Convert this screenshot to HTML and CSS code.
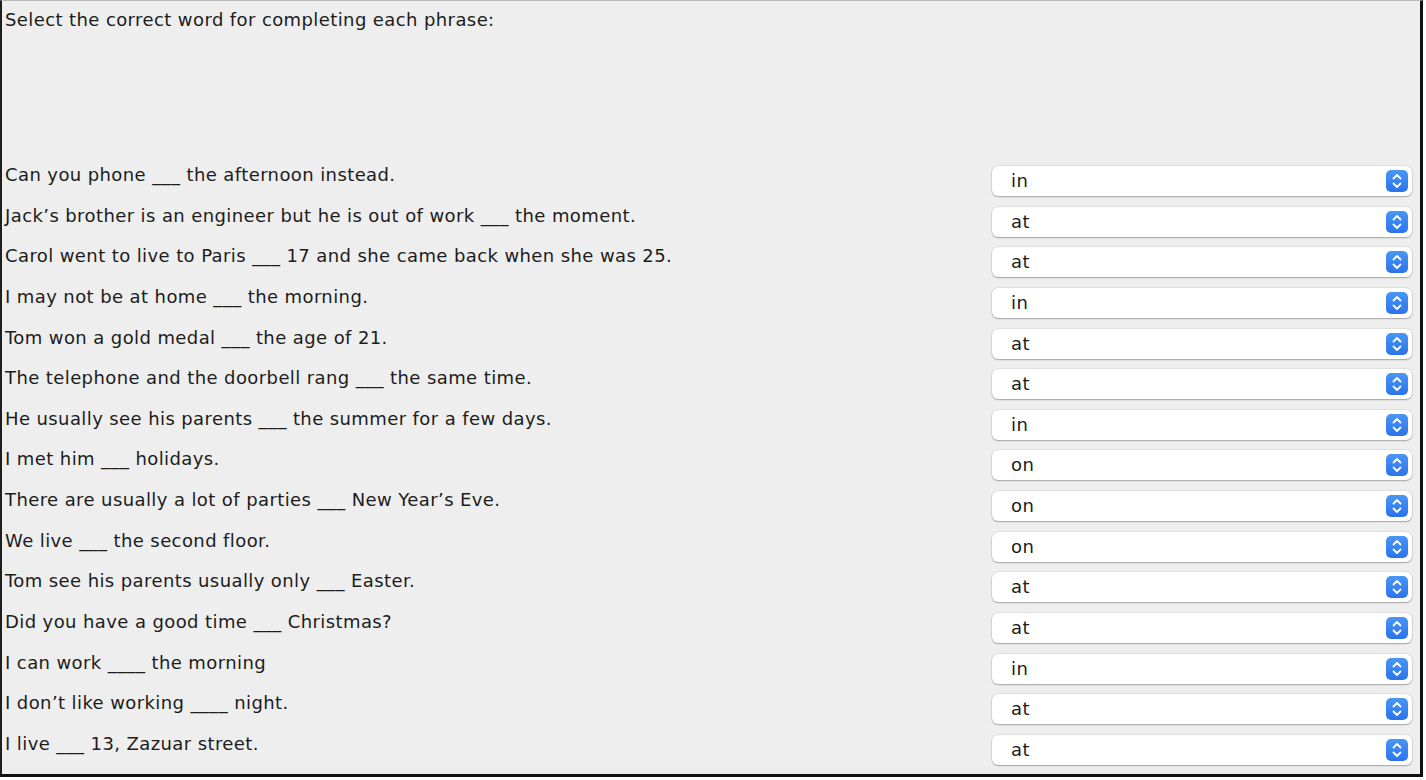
FILE: index.html
```html
<!DOCTYPE html>
<html>
<head>
<meta charset="utf-8">
<link rel="stylesheet" href="styles.css">
</head>
<body>
<div class="frame">
  <div class="title">Select the correct word for completing each phrase:</div>
  <div class="rows">
    <div class="label">Can you phone ___ the afternoon instead.</div>
    <div class="select"><span class="val">in</span><span class="stepper"><svg viewBox="0 0 22 22" width="22" height="22"><path d="M7.5 8.5 L11 5 L14.5 8.5 M7.5 13.5 L11 17 L14.5 13.5" fill="none" stroke="#fff" stroke-width="1.8" stroke-linecap="round" stroke-linejoin="round"/></svg></span></div>

    <div class="label">Jack’s brother is an engineer but he is out of work ___ the moment.</div>
    <div class="select"><span class="val">at</span><span class="stepper"><svg viewBox="0 0 22 22" width="22" height="22"><path d="M7.5 8.5 L11 5 L14.5 8.5 M7.5 13.5 L11 17 L14.5 13.5" fill="none" stroke="#fff" stroke-width="1.8" stroke-linecap="round" stroke-linejoin="round"/></svg></span></div>

    <div class="label">Carol went to live to Paris ___ 17 and she came back when she was 25.</div>
    <div class="select"><span class="val">at</span><span class="stepper"><svg viewBox="0 0 22 22" width="22" height="22"><path d="M7.5 8.5 L11 5 L14.5 8.5 M7.5 13.5 L11 17 L14.5 13.5" fill="none" stroke="#fff" stroke-width="1.8" stroke-linecap="round" stroke-linejoin="round"/></svg></span></div>

    <div class="label">I may not be at home ___ the morning.</div>
    <div class="select"><span class="val">in</span><span class="stepper"><svg viewBox="0 0 22 22" width="22" height="22"><path d="M7.5 8.5 L11 5 L14.5 8.5 M7.5 13.5 L11 17 L14.5 13.5" fill="none" stroke="#fff" stroke-width="1.8" stroke-linecap="round" stroke-linejoin="round"/></svg></span></div>

    <div class="label">Tom won a gold medal ___ the age of 21.</div>
    <div class="select"><span class="val">at</span><span class="stepper"><svg viewBox="0 0 22 22" width="22" height="22"><path d="M7.5 8.5 L11 5 L14.5 8.5 M7.5 13.5 L11 17 L14.5 13.5" fill="none" stroke="#fff" stroke-width="1.8" stroke-linecap="round" stroke-linejoin="round"/></svg></span></div>

    <div class="label">The telephone and the doorbell rang ___ the same time.</div>
    <div class="select"><span class="val">at</span><span class="stepper"><svg viewBox="0 0 22 22" width="22" height="22"><path d="M7.5 8.5 L11 5 L14.5 8.5 M7.5 13.5 L11 17 L14.5 13.5" fill="none" stroke="#fff" stroke-width="1.8" stroke-linecap="round" stroke-linejoin="round"/></svg></span></div>

    <div class="label">He usually see his parents ___ the summer for a few days.</div>
    <div class="select"><span class="val">in</span><span class="stepper"><svg viewBox="0 0 22 22" width="22" height="22"><path d="M7.5 8.5 L11 5 L14.5 8.5 M7.5 13.5 L11 17 L14.5 13.5" fill="none" stroke="#fff" stroke-width="1.8" stroke-linecap="round" stroke-linejoin="round"/></svg></span></div>

    <div class="label">I met him ___ holidays.</div>
    <div class="select"><span class="val">on</span><span class="stepper"><svg viewBox="0 0 22 22" width="22" height="22"><path d="M7.5 8.5 L11 5 L14.5 8.5 M7.5 13.5 L11 17 L14.5 13.5" fill="none" stroke="#fff" stroke-width="1.8" stroke-linecap="round" stroke-linejoin="round"/></svg></span></div>

    <div class="label">There are usually a lot of parties ___ New Year’s Eve.</div>
    <div class="select"><span class="val">on</span><span class="stepper"><svg viewBox="0 0 22 22" width="22" height="22"><path d="M7.5 8.5 L11 5 L14.5 8.5 M7.5 13.5 L11 17 L14.5 13.5" fill="none" stroke="#fff" stroke-width="1.8" stroke-linecap="round" stroke-linejoin="round"/></svg></span></div>

    <div class="label">We live ___ the second floor.</div>
    <div class="select"><span class="val">on</span><span class="stepper"><svg viewBox="0 0 22 22" width="22" height="22"><path d="M7.5 8.5 L11 5 L14.5 8.5 M7.5 13.5 L11 17 L14.5 13.5" fill="none" stroke="#fff" stroke-width="1.8" stroke-linecap="round" stroke-linejoin="round"/></svg></span></div>

    <div class="label">Tom see his parents usually only ___ Easter.</div>
    <div class="select"><span class="val">at</span><span class="stepper"><svg viewBox="0 0 22 22" width="22" height="22"><path d="M7.5 8.5 L11 5 L14.5 8.5 M7.5 13.5 L11 17 L14.5 13.5" fill="none" stroke="#fff" stroke-width="1.8" stroke-linecap="round" stroke-linejoin="round"/></svg></span></div>

    <div class="label">Did you have a good time ___ Christmas?</div>
    <div class="select"><span class="val">at</span><span class="stepper"><svg viewBox="0 0 22 22" width="22" height="22"><path d="M7.5 8.5 L11 5 L14.5 8.5 M7.5 13.5 L11 17 L14.5 13.5" fill="none" stroke="#fff" stroke-width="1.8" stroke-linecap="round" stroke-linejoin="round"/></svg></span></div>

    <div class="label">I can work ____ the morning</div>
    <div class="select"><span class="val">in</span><span class="stepper"><svg viewBox="0 0 22 22" width="22" height="22"><path d="M7.5 8.5 L11 5 L14.5 8.5 M7.5 13.5 L11 17 L14.5 13.5" fill="none" stroke="#fff" stroke-width="1.8" stroke-linecap="round" stroke-linejoin="round"/></svg></span></div>

    <div class="label">I don’t like working ____ night.</div>
    <div class="select"><span class="val">at</span><span class="stepper"><svg viewBox="0 0 22 22" width="22" height="22"><path d="M7.5 8.5 L11 5 L14.5 8.5 M7.5 13.5 L11 17 L14.5 13.5" fill="none" stroke="#fff" stroke-width="1.8" stroke-linecap="round" stroke-linejoin="round"/></svg></span></div>

    <div class="label">I live ___ 13, Zazuar street.</div>
    <div class="select"><span class="val">at</span><span class="stepper"><svg viewBox="0 0 22 22" width="22" height="22"><path d="M7.5 8.5 L11 5 L14.5 8.5 M7.5 13.5 L11 17 L14.5 13.5" fill="none" stroke="#fff" stroke-width="1.8" stroke-linecap="round" stroke-linejoin="round"/></svg></span></div>
  </div>
</div>
</body>
</html>
```

FILE: styles.css
```css
html, body {
  margin: 0;
  padding: 0;
  background: #ffffff;
}

.frame {
  box-sizing: border-box;
  width: 1423px;
  height: 777px;
  background: #eeeeee;
  border-top: 1px solid #b8b8b8;
  border-left: 2px solid #1e1e1e;
  border-right: 3px solid #111111;
  border-bottom: 3px solid #111111;
  padding: 4px 8px 0 3px;
  font-family: "DejaVu Sans", "Liberation Sans", sans-serif;
  font-size: 18px;
  letter-spacing: 0.4px;
  color: #1c1c1c;
  display: flex;
  flex-direction: column;
}

.title {
  height: 30px;
  line-height: 30px;
  white-space: nowrap;
}

.rows {
  margin-top: 125px;
  display: grid;
  grid-template-columns: 1fr 420px;
  grid-template-rows: repeat(15, 40.64px);
}

.label {
  height: 30px;
  line-height: 30px;
  white-space: nowrap;
}

.select {
  box-sizing: border-box;
  margin-top: 6px;
  height: 30px;
  background: #ffffff;
  border-radius: 6px;
  box-shadow: 0 0 0 0.5px rgba(0, 0, 0, 0.12), 0 1px 1.5px rgba(0, 0, 0, 0.28);
  display: flex;
  align-items: center;
  justify-content: space-between;
  padding: 0 4px 0 19px;
}

.val {
  line-height: 30px;
  color: #1c1c1c;
}

.stepper {
  width: 22px;
  height: 22px;
  border-radius: 5px;
  background: linear-gradient(#4a96f7, #2a74ea);
  display: flex;
}
```
